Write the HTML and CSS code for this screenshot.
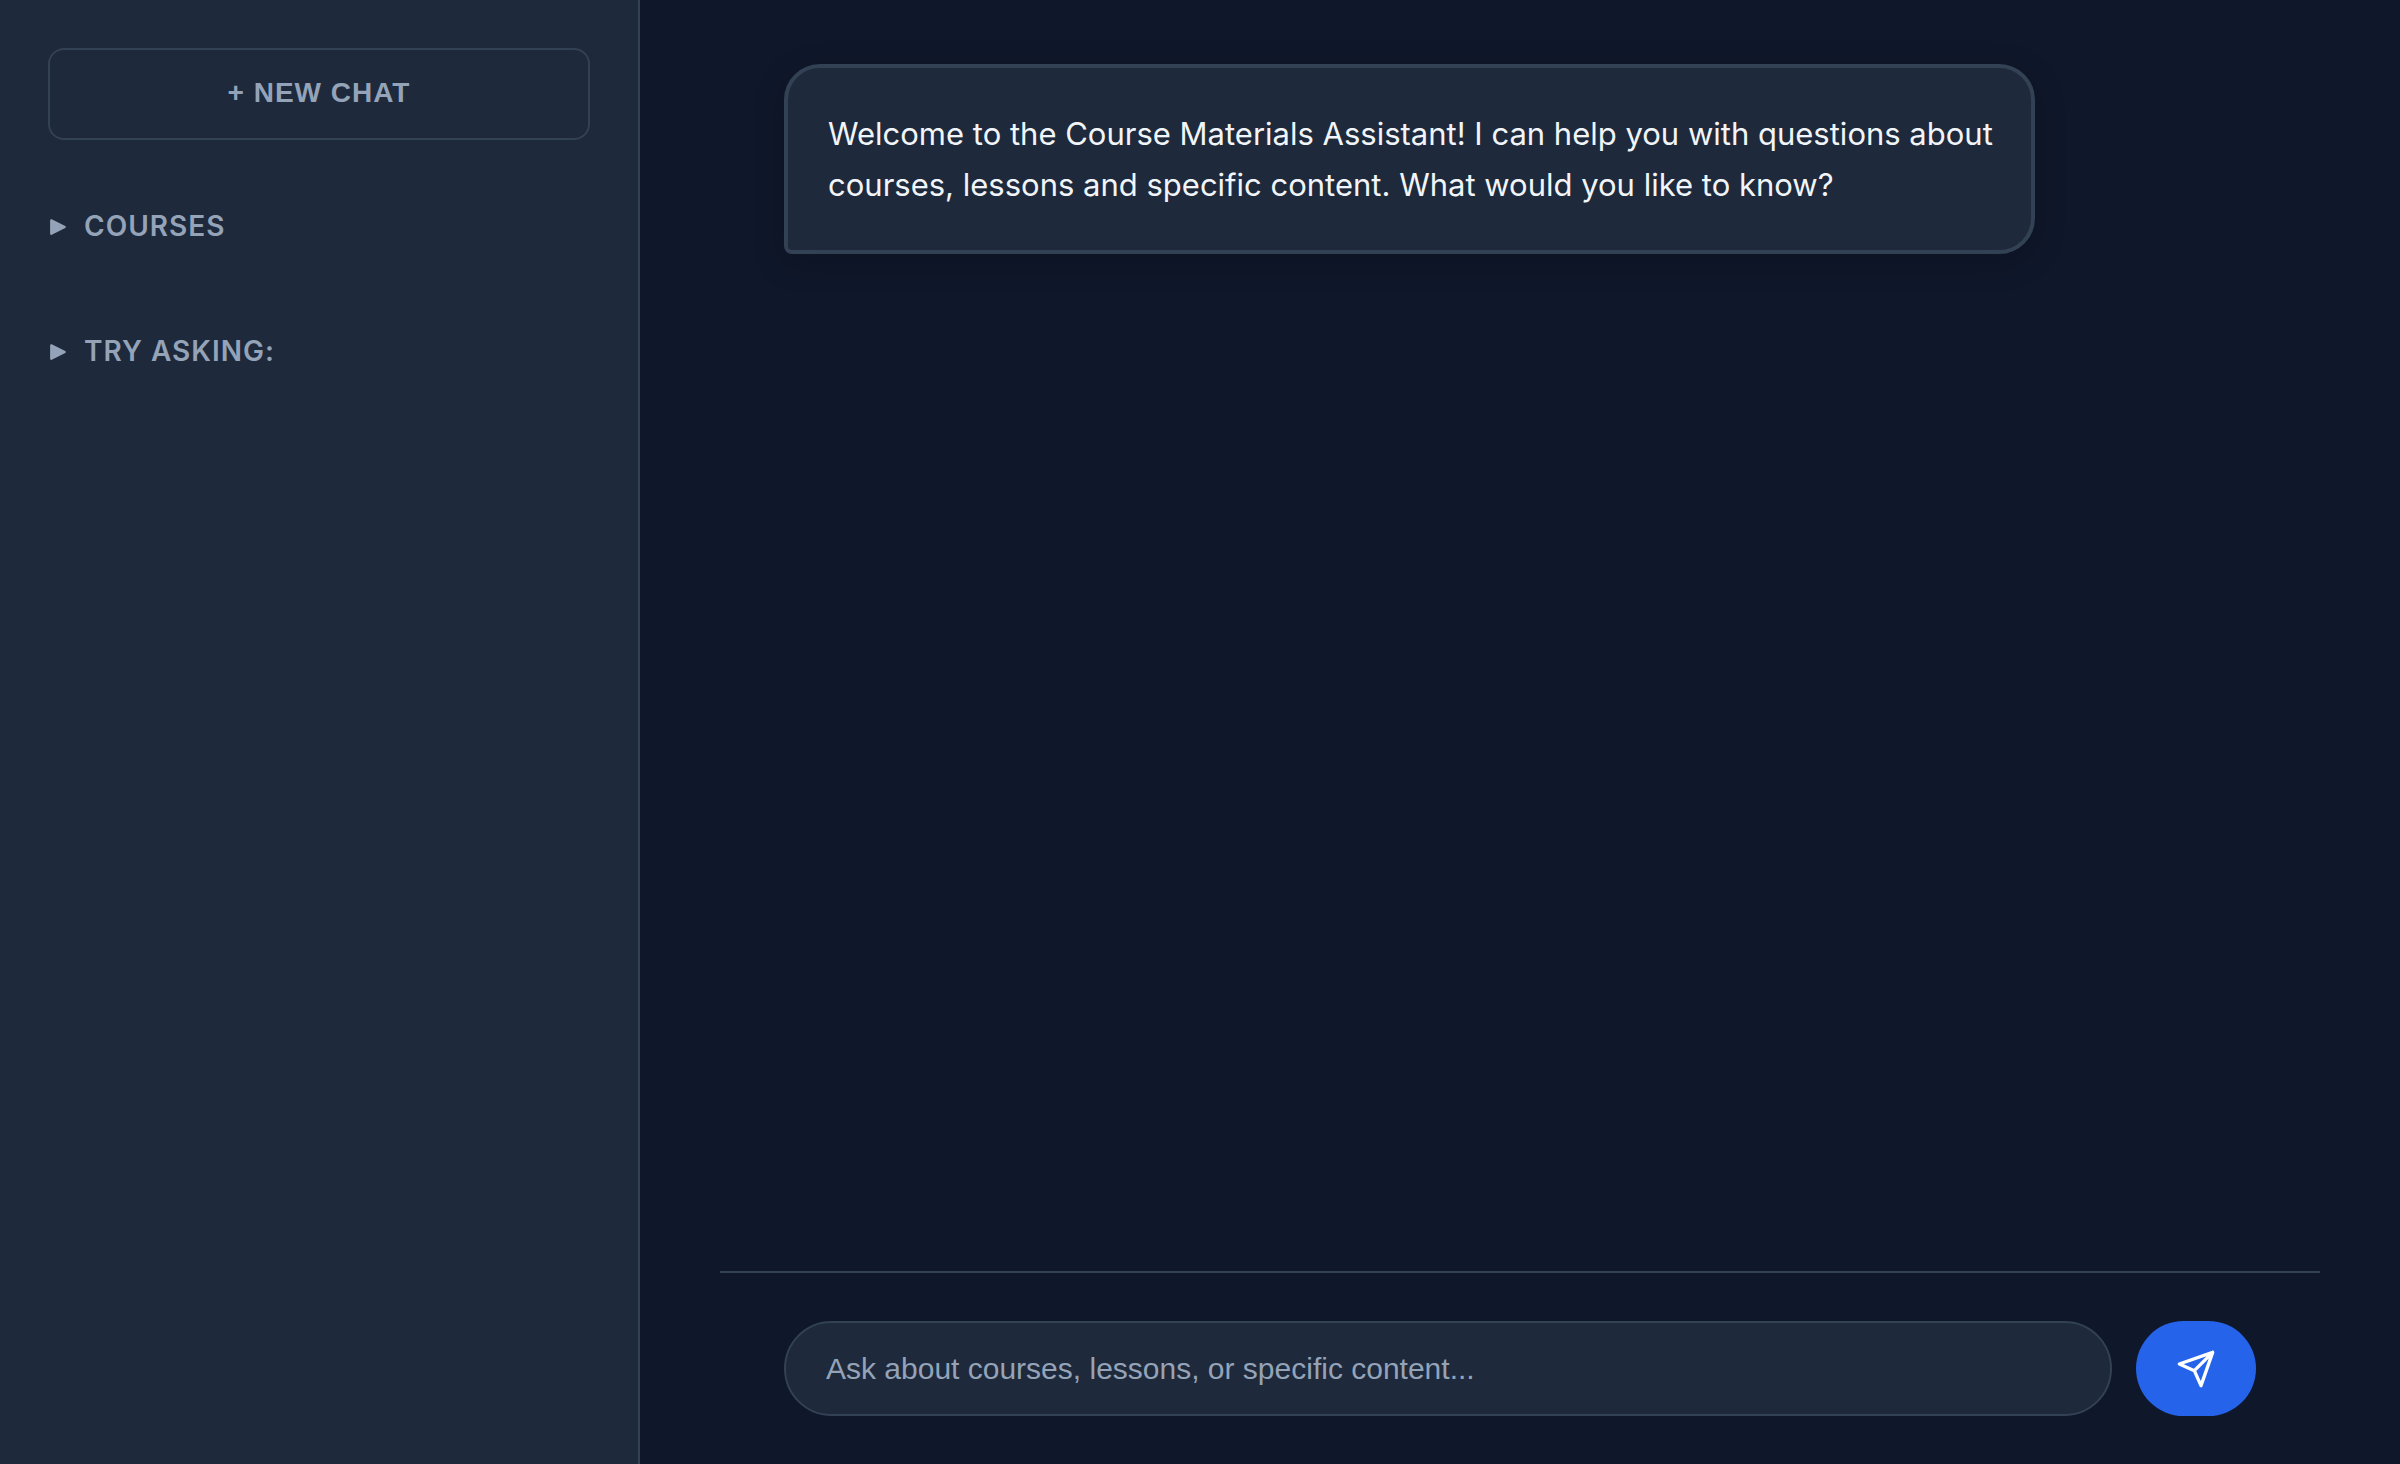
FILE: index.html
```html
<!DOCTYPE html>
<html lang="en">
<head>
<meta charset="utf-8">
<meta name="viewport" content="width=device-width, initial-scale=1">
<title>Course Materials Assistant</title>
<link rel="stylesheet" href="styles.css">
</head>
<body>
<div class="layout">
  <aside class="sidebar">
    <button class="new-chat" type="button">+ NEW CHAT</button>
    <details class="section">
      <summary class="section-title"><svg class="marker" viewBox="0 0 16 16" aria-hidden="true"><path d="M2 2L14 8L2 14Z"/></svg>COURSES</summary>
    </details>
    <details class="section">
      <summary class="section-title"><svg class="marker" viewBox="0 0 16 16" aria-hidden="true"><path d="M2 2L14 8L2 14Z"/></svg>TRY ASKING:</summary>
    </details>
  </aside>
  <main class="chat">
    <div class="messages">
      <p class="message">Welcome to the Course Materials Assistant! I can help you with questions about courses, lessons and specific content. What would you like to know?</p>
    </div>
    <form class="composer">
      <input class="query" type="text" aria-label="Your question" placeholder="Ask about courses, lessons, or specific content...">
      <button class="send" type="button" aria-label="Send">
        <svg class="send-icon" viewBox="0 0 24 24" aria-hidden="true"><path d="M22 2L11 13M22 2l-7 20-4-9-9-4 20-7z"/></svg>
      </button>
    </form>
  </main>
</div>
</body>
</html>
```
FILE: styles.css
```css
* {
  box-sizing: border-box;
}

body {
  margin: 0;
  background: #0f172a;
  color: #f1f5f9;
  font-family: Inter, "Liberation Sans", sans-serif;
}

.layout {
  display: flex;
  min-height: 100vh;
}

.sidebar {
  display: flex;
  flex-direction: column;
  gap: 48px;
  flex: 0 0 640px;
  padding: 48px;
  background: #1e293b;
  border-right: 2px solid #334155;
}

.new-chat {
  padding: 25px 32px 27px;
  border: 2px solid #334155;
  border-radius: 16px;
  background: none;
  color: #94a3b8;
  font: 700 28px/36px "Liberation Sans", Arial, sans-serif;
  letter-spacing: 1px;
}

.section {
  padding: 16px 0;
}

.section-title {
  display: flex;
  align-items: center;
  gap: 17px;
  list-style: none;
  padding-left: 1px;
  color: #94a3b8;
  font-size: 28px;
  font-weight: 600;
  line-height: 45px;
  letter-spacing: 1px;
}

.marker {
  width: 18px;
  height: 18px;
  fill: currentColor;
  stroke: currentColor;
  stroke-width: 2;
  stroke-linejoin: round;
}

.chat {
  display: flex;
  flex-direction: column;
  flex: 1;
  max-width: 1600px;
  margin: 0 auto;
}

.messages {
  flex: 1;
  padding: 64px;
}

.message {
  width: fit-content;
  max-width: 85%;
  margin: 0;
  padding: 40px 32px 40px 40px;
  border: 4px solid #334155;
  border-radius: 36px 36px 36px 8px;
  background: #1e293b;
  box-shadow: 0 8px 32px rgba(0, 0, 0, 0.2);
  font-size: 31px;
  line-height: 51px;
}

.composer {
  display: flex;
  gap: 24px;
  padding: 48px 64px;
  border-top: 2px solid #334155;
}

.query {
  flex: 1;
  min-width: 0;
  height: 95px;
  padding: 0 40px;
  border: 2px solid #334155;
  border-radius: 48px;
  background: #1e293b;
  color: #f1f5f9;
  font: 30px "Liberation Sans", Arial, sans-serif;
}

.query::placeholder {
  color: #94a3b8;
}

.send {
  display: flex;
  align-items: center;
  justify-content: center;
  width: 120px;
  padding: 0;
  border: 0;
  border-radius: 48px;
  background: #2563eb;
  color: #fff;
}

.send-icon {
  width: 40px;
  height: 40px;
  fill: none;
  stroke: currentColor;
  stroke-width: 2;
  stroke-linecap: round;
  stroke-linejoin: round;
}
```
